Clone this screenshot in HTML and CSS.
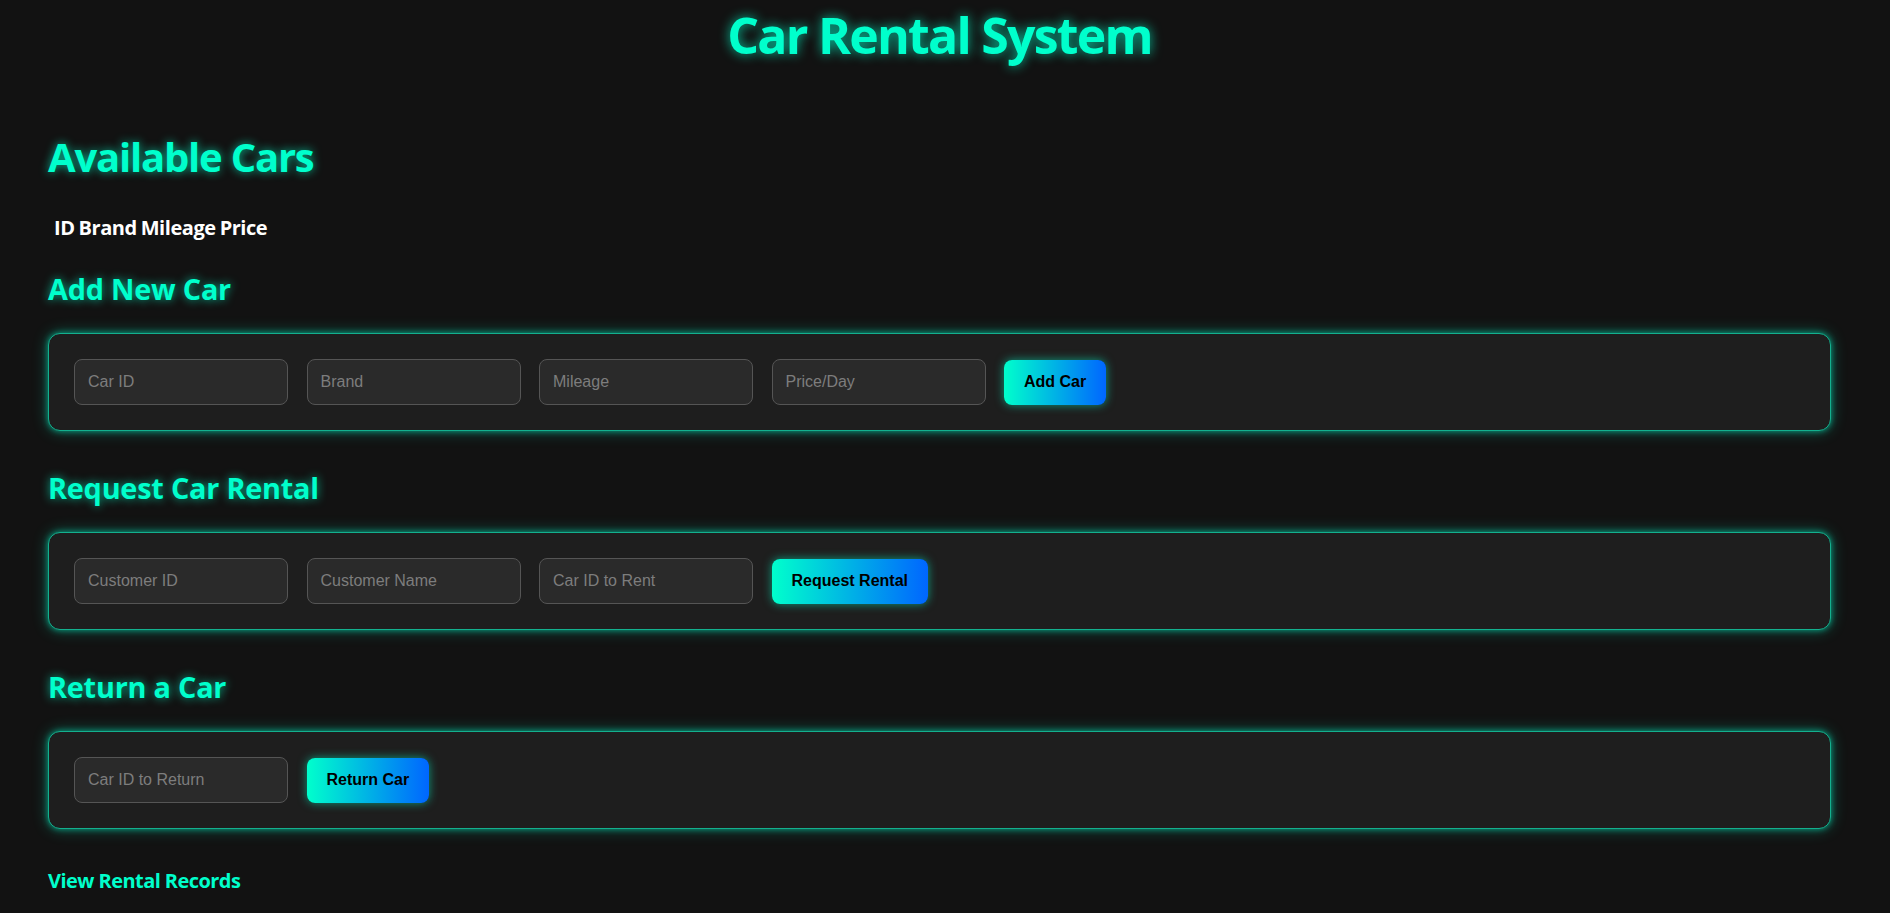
FILE: index.html
```html
<!DOCTYPE html>
<html lang="en">
<head>
<meta charset="utf-8">
<title>Car Rental System</title>
<link rel="stylesheet" href="styles.css">
</head>
<body>
<main class="page">
  <h1 class="title">Car Rental System</h1>

  <h2 class="section-title">Available Cars</h2>
  <table class="cars">
    <thead>
      <tr><th>ID</th><th>Brand</th><th>Mileage</th><th>Price</th></tr>
    </thead>
    <tbody></tbody>
  </table>

  <section class="block">
    <h3 class="block-title">Add New Car</h3>
    <form class="card">
      <input class="field" type="text" placeholder="Car ID">
      <input class="field" type="text" placeholder="Brand">
      <input class="field" type="text" placeholder="Mileage">
      <input class="field" type="text" placeholder="Price/Day">
      <button class="btn" type="button">Add Car</button>
    </form>
  </section>

  <section class="block">
    <h3 class="block-title">Request Car Rental</h3>
    <form class="card">
      <input class="field" type="text" placeholder="Customer ID">
      <input class="field" type="text" placeholder="Customer Name">
      <input class="field" type="text" placeholder="Car ID to Rent">
      <button class="btn" type="button">Request Rental</button>
    </form>
  </section>

  <section class="block">
    <h3 class="block-title">Return a Car</h3>
    <form class="card">
      <input class="field" type="text" placeholder="Car ID to Return">
      <button class="btn" type="button">Return Car</button>
    </form>
  </section>

  <a class="records" href="#">View Rental Records</a>
</main>
</body>
</html>
```

FILE: styles.css
```css
* { box-sizing: border-box; }

html, body {
  margin: 0;
  background: #121212;
}

body {
  font-family: "Open Sans", "Noto Sans", "Liberation Sans", sans-serif;
  color: #ffffff;
}

.page {
  padding: 5px 59px 20px 48px;
}

.title {
  margin: 0;
  text-align: center;
  font-size: 50px;
  line-height: 60px;
  font-weight: 700;
  letter-spacing: -1.75px;
  color: #00ffcc;
  text-shadow: 0 0 12px rgba(0, 255, 204, 0.75);
}

.section-title {
  margin: 68px 0 0;
  font-size: 40px;
  line-height: 48px;
  font-weight: 700;
  letter-spacing: -1.2px;
  color: #00ffcc;
  text-shadow: 0 0 10px rgba(0, 255, 204, 0.7);
}

.cars {
  margin: 33px 0 0 3px;
  border-spacing: 2px;
  font-size: 20px;
  line-height: 24px;
  letter-spacing: -0.45px;
}

.cars th {
  padding: 0 1px;
  font-weight: 700;
  color: #ffffff;
}

.block {
  margin-top: 30px;
}

.block + .block {
  margin-top: 40px;
}

.block-title {
  margin: 0 0 27px;
  font-size: 28.8px;
  line-height: 34px;
  font-weight: 700;
  letter-spacing: -0.2px;
  color: #00ffcc;
  text-shadow: 0 0 10px rgba(0, 255, 204, 0.7);
}

.card {
  display: flex;
  align-items: center;
  gap: 18.5px;
  margin: 0;
  padding: 25px;
  height: 98px;
  background: #1e1e1e;
  border: 1px solid #13b08e;
  border-radius: 12px;
  box-shadow: 0 0 6px rgba(0, 255, 204, 0.55), 0 0 16px rgba(0, 255, 204, 0.3);
}

.field {
  width: 214px;
  height: 46px;
  padding: 0 13px;
  font-family: "Liberation Sans", Arial, sans-serif;
  font-size: 16px;
  color: #dddddd;
  background: #2a2a2a;
  border: 1px solid #555555;
  border-radius: 8px;
  outline: none;
}

.field::placeholder {
  color: #7d7d7d;
}

.btn {
  height: 45px;
  padding: 0 20px;
  font-family: "Liberation Sans", Arial, sans-serif;
  font-size: 16px;
  font-weight: 700;
  color: #000000;
  background: linear-gradient(90deg, #00ffcc, #0066ff);
  border: none;
  border-radius: 8px;
  box-shadow: 0 0 10px rgba(0, 255, 204, 0.55);
  cursor: pointer;
}

.records {
  display: inline-block;
  margin-top: 40px;
  font-size: 20px;
  line-height: 24px;
  font-weight: 700;
  letter-spacing: -0.55px;
  color: #00ffcc;
  text-decoration: none;
}
```
